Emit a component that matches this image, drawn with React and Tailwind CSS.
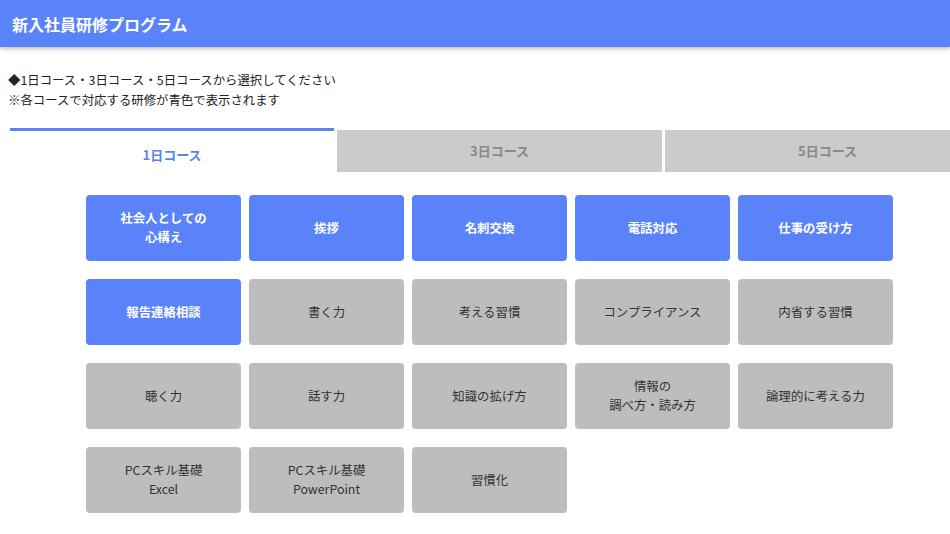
import React from "react"

const courses = [
  { name: "社会人としての\n心構え", active: true },
  { name: "挨拶", active: true },
  { name: "名刺交換", active: true },
  { name: "電話対応", active: true },
  { name: "仕事の受け方", active: true },
  { name: "報告連絡相談", active: true },
  { name: "書く力" },
  { name: "考える習慣" },
  { name: "コンプライアンス" },
  { name: "内省する習慣" },
  { name: "聴く力" },
  { name: "話す力" },
  { name: "知識の拡げ方" },
  { name: "情報の\n調べ方・読み方" },
  { name: "論理的に考える力" },
  { name: "PCスキル基礎\nExcel" },
  { name: "PCスキル基礎\nPowerPoint" },
  { name: "習慣化" },
]

export default function App() {
  return (
    <div className="h-[534px] w-[950px] overflow-hidden bg-white font-['Noto_Sans_CJK_JP','Noto_Sans',sans-serif]">
      <header className="flex h-[47px] items-center bg-[#5a83fa] px-3 shadow-[0_2px_4px_rgba(0,0,0,0.25)]">
        <h1 className="text-[16px] font-bold text-white">新入社員研修プログラム</h1>
      </header>

      <div className="pt-[23px] pl-[8px] text-[12.4px] leading-[20px] text-[#222]">
        <p>◆1日コース・3日コース・5日コースから選択してください</p>
        <p>※各コースで対応する研修が青色で表示されます</p>
      </div>

      <div className="ml-[10px] mt-[18px] w-[980px]">
        <div className="flex gap-[3px]">
          <div className="flex h-[46px] w-[324px] items-center justify-center border-t-[3px] border-[#5a83f0] bg-white pt-[4px] text-[13px] font-bold text-[#5a83f0]">
            1日コース
          </div>
          <div className="mt-[2px] flex h-[42px] w-[325px] items-center justify-center bg-[#cbcbcb] text-[13px] font-bold text-[#8a8a8a]">
            3日コース
          </div>
          <div className="mt-[2px] flex h-[42px] w-[325px] items-center justify-center bg-[#cbcbcb] text-[13px] font-bold text-[#8a8a8a]">
            5日コース
          </div>
        </div>

        <div className="ml-[76px] mt-[21px] grid w-[807px] grid-cols-5 gap-x-[8px] gap-y-[18px]">
          {courses.map((c) => (
            <div
              key={c.name}
              className={`flex h-[66px] items-center justify-center whitespace-pre-line rounded-[4px] text-center text-[12.4px] leading-[19px] ${
                c.active ? "bg-[#5a83fa] font-bold text-white" : "bg-[#bdbdbd] text-[#333]"
              }`}
            >
              {c.name}
            </div>
          ))}
        </div>
      </div>
    </div>
  )
}
